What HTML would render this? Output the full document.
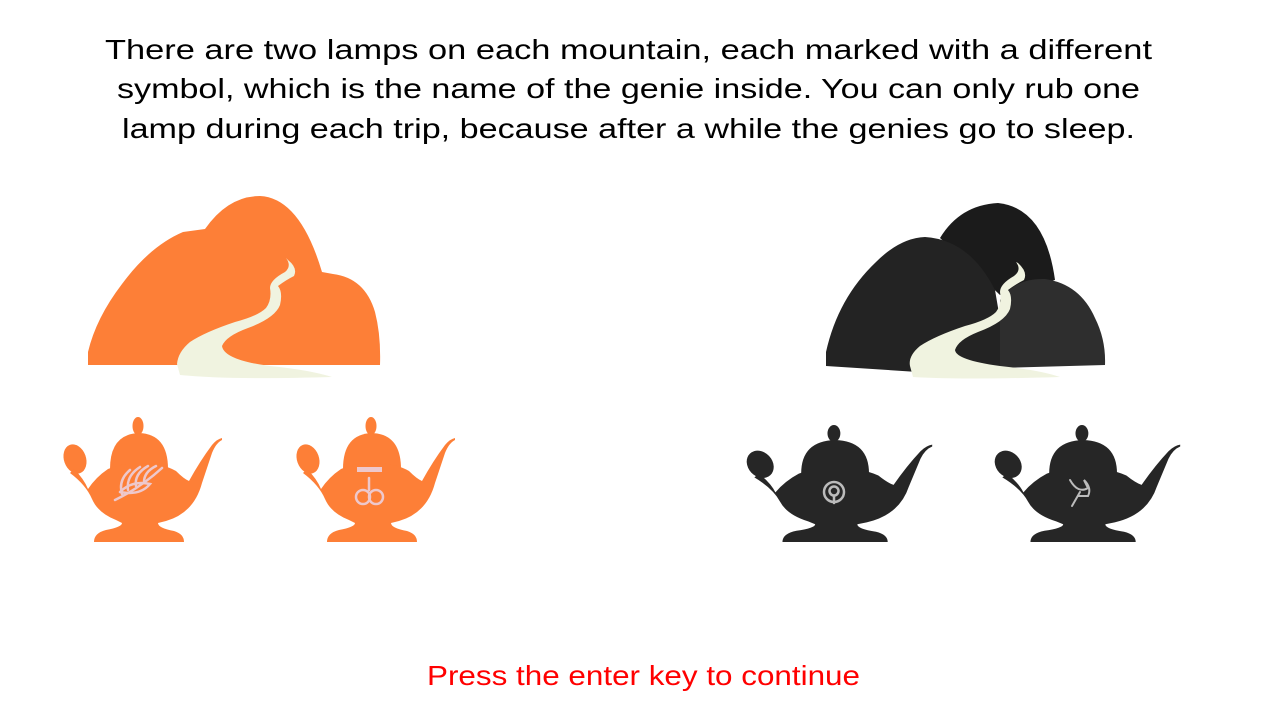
<!DOCTYPE html>
<html><head><meta charset="utf-8"><style>
html,body{margin:0;padding:0;background:#fff;}
svg{display:block}
</style></head><body>
<svg width="1264" height="708" viewBox="0 0 1264 708" xmlns="http://www.w3.org/2000/svg">
<defs>
<g id="lamp">
  <ellipse cx="76" cy="9" rx="5.5" ry="9"/>
  <path d="M48 52 Q48 17 77 16 Q106 17 106 52 Z"/>
  <ellipse cx="13" cy="42" rx="11" ry="15" transform="rotate(-20 13 42)"/>
  <path d="M12 52 Q22 62 26 72 Q34 60 46 52 Q60 46 78 46 Q100 46 114 54 Q122 62 127 64 Q138 44 150 28 Q155 22 160 21 L160 23 Q154 26 150 36 L140 66 Q132 96 104 104 L96 106 Q96 111 112 114 Q122 117 122 125 L32 125 Q32 116 44 113 Q60 110 60 106 L54 103 Q36 96 30 82 Q24 68 8 56 Z"/>
</g>
</defs>

<g font-family="'Liberation Sans', sans-serif" font-size="28" fill="#000">
<text x="105" y="59" textLength="1047" lengthAdjust="spacingAndGlyphs">There are two lamps on each mountain, each marked with a different</text>
<text x="117" y="98" textLength="1023" lengthAdjust="spacingAndGlyphs">symbol, which is the name of the genie inside. You can only rub one</text>
<text x="122" y="138" textLength="1013" lengthAdjust="spacingAndGlyphs">lamp during each trip, because after a while the genies go to sleep.</text>
<text x="427" y="685" textLength="433" lengthAdjust="spacingAndGlyphs" fill="#ff0000">Press the enter key to continue</text>
</g>

<!-- orange mountain -->
<path fill="#fd7f37" d="M88 352 Q96 318 122 284 Q150 246 183 232 L205 229 Q228 196 260 196 Q300 198 322 272 L333 274 Q365 278 375 312 Q381 335 380 365 L88 365 Z"/>
<path fill="#f0f3e0" d="M286 258 Q292 266 285 272 Q270 280 270 288 Q272 300 266 308 Q258 316 235 322 Q205 332 190 342 Q178 352 177 364 L180 375 Q230 380 332 377 Q310 370 270 366 Q224 360 222 346 Q226 336 248 328 Q275 318 280 305 Q283 292 278 286 Q286 280 294 276 Q298 268 288 260 Z"/>

<!-- black mountain -->
<path fill="#1b1b1b" d="M940 238 Q960 205 998 203 Q1045 208 1055 280 L1000 295 Z"/>
<path fill="#232323" d="M826 352 Q838 298 876 262 Q900 238 925 237 Q970 240 995 290 L1010 378 L826 366 Z"/>
<path fill="#2e2e2e" d="M1000 300 Q1015 278 1045 279 Q1080 284 1095 318 Q1106 340 1105 365 L1000 368 Z"/>
<path fill="#f0f3e0" d="M1016 262 Q1022 270 1014 276 Q1000 284 1000 292 Q1002 304 996 312 Q988 320 965 326 Q935 336 920 346 Q908 356 910 366 L913 377 Q960 380 1060 377 Q1040 370 1000 366 Q956 360 955 350 Q958 340 978 332 Q1005 322 1010 309 Q1013 296 1008 290 Q1016 284 1024 280 Q1028 272 1018 263 Z"/>

<!-- lamps -->
<g fill="#fd7f37">
  <use href="#lamp" transform="translate(62,417)"/>
  <use href="#lamp" transform="translate(295,417)"/>
</g>
<g fill="#262626">
  <use href="#lamp" transform="translate(745,425) scale(1.17,0.936)"/>
  <use href="#lamp" transform="translate(993,425) scale(1.17,0.936)"/>
</g>

<!-- symbols -->
<g fill="none" stroke="#eec8cc" stroke-width="2.5" stroke-linecap="round">
  <path d="M115 500 Q140 488 162 468"/>
  <path d="M122 494 Q118 480 130 470"/>
  <path d="M128 490 Q126 476 140 467"/>
  <path d="M136 486 Q134 474 148 466"/>
  <path d="M144 482 Q144 472 156 466"/>
  <path d="M120 492 Q132 480 150 484 Q140 496 120 492"/>
  <circle cx="363" cy="497" r="7"/>
  <circle cx="376" cy="497" r="7"/>
  <path d="M369 478 L369 490"/>
  <circle cx="834" cy="492" r="10" stroke="#bbbbbb"/>
  <circle cx="834" cy="491" r="4.5" stroke="#bbbbbb"/>
  <path d="M834 496 L834 503" stroke="#bbbbbb"/>
  <path d="M1070 480 Q1078 494 1088 488 L1084 480 Q1092 488 1088 496 L1078 496 M1080 492 L1072 506" stroke="#bbbbbb" stroke-width="2"/>
</g>
<rect x="357" y="467" width="25" height="5" fill="#eec8cc"/>
</svg>
</body></html>
